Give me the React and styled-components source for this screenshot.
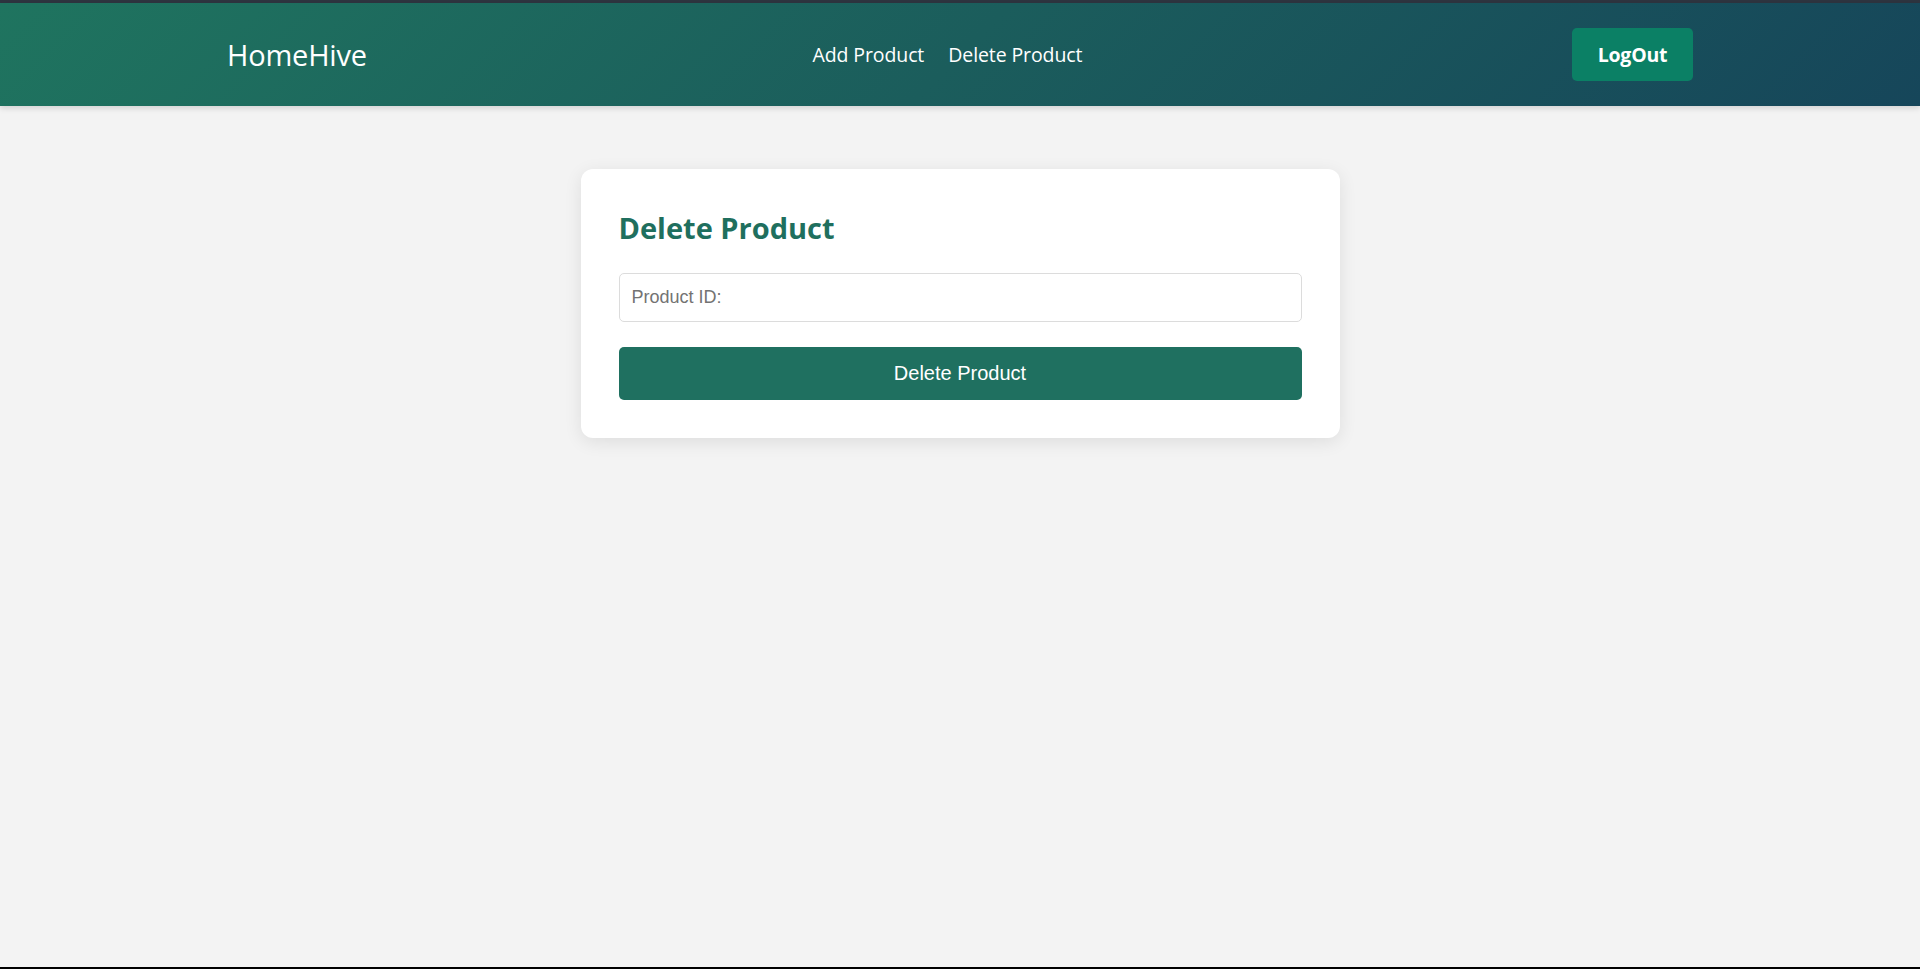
import React, { useState } from 'react';
import styled, { createGlobalStyle } from 'styled-components';

const GlobalStyle = createGlobalStyle`
  * { box-sizing: border-box; }
  body {
    margin: 0;
    background: #f3f3f3;
    font-family: "Open Sans", "Noto Sans", sans-serif;
  }
`;

const App = () => {
  const [productId, setProductId] = useState('');

  const handleDelete = e => {
    e.preventDefault();
    setProductId(() => '');
  };

  return (
    <Page>
      <GlobalStyle />
      <NavBar>
        <NavInner>
          <Logo>HomeHive</Logo>
          <NavLinks>
            <NavLink href="#">Add Product</NavLink>
            <NavLink href="#">Delete Product</NavLink>
          </NavLinks>
          <LogoutButton>LogOut</LogoutButton>
        </NavInner>
      </NavBar>
      <Main>
        <Card onSubmit={handleDelete}>
          <Title>Delete Product</Title>
          <Input
            placeholder="Product ID:"
            value={productId}
            onChange={e => setProductId(e.target.value)}
          />
          <SubmitButton type="submit">Delete Product</SubmitButton>
        </Card>
      </Main>
    </Page>
  );
};

export default App;

const Page = styled.div`
  min-height: 100vh;
  display: flex;
  flex-direction: column;
  border-top: 3px solid #2e3540;
  border-bottom: 2px solid #000;
`;
const NavBar = styled.header`
  height: 103px;
  background: linear-gradient(135deg, #1f745f 0%, #1b5d5c 50%, #16465a 100%);
  box-shadow: 0 2px 6px rgba(0, 0, 0, 0.15);
  display: flex;
  align-items: center;
`;
const NavInner = styled.nav`
  width: 100%;
  padding: 0 227px;
  display: flex;
  align-items: center;
  justify-content: space-between;
`;
const Logo = styled.div`
  color: #fff;
  font-size: 29px;
  letter-spacing: -0.2px;
`;
const NavLinks = styled.div`
  display: flex;
  gap: 24px;
  margin-right: 44px;
`;
const NavLink = styled.a`
  color: #fff;
  text-decoration: none;
  font-size: 19.5px;
  letter-spacing: -0.1px;
`;
const LogoutButton = styled.button`
  width: 121px;
  height: 53px;
  border: none;
  border-radius: 5px;
  background: #0b8065;
  color: #fff;
  font-family: "Open Sans", sans-serif;
  font-weight: 700;
  font-size: 19.5px;
  letter-spacing: -0.2px;
  cursor: pointer;
`;
const Main = styled.main`
  flex: 1;
  display: flex;
  justify-content: center;
  align-items: flex-start;
  padding-top: 63px;
`;
const Card = styled.form`
  width: 759px;
  background: #fff;
  border-radius: 12px;
  padding: 38px;
  box-shadow: 0 4px 18px rgba(0, 0, 0, 0.09);
  display: flex;
  flex-direction: column;
`;
const Title = styled.h2`
  margin: 3px 0 27px;
  color: #1f6f5e;
  font-size: 29px;
  font-weight: 700;
  letter-spacing: 0;
  line-height: 36px;
`;
const Input = styled.input`
  height: 49px;
  border: 1px solid #dcdcdc;
  border-radius: 5px;
  padding: 0 12px;
  font-family: "Liberation Sans", Arial, sans-serif;
  font-size: 18px;
  color: #333;
  outline: none;
  &::placeholder { color: #737373; }
`;
const SubmitButton = styled.button`
  margin-top: 25px;
  height: 53px;
  border: none;
  border-radius: 5px;
  background: #1f7060;
  color: #fff;
  font-family: "Liberation Sans", Arial, sans-serif;
  font-size: 20px;
  cursor: pointer;
`;
